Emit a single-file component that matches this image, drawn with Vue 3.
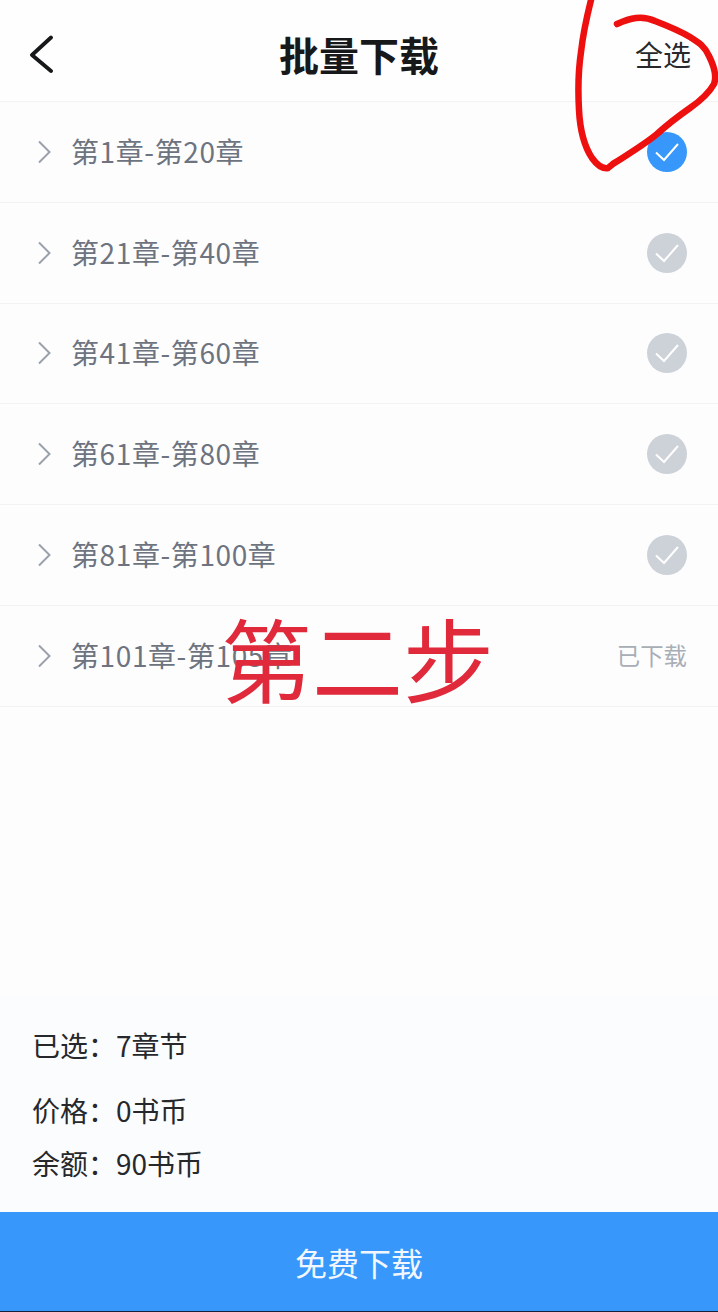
<script setup>
const rows = [
  { label: '第1章-第20章', state: 'on' },
  { label: '第21章-第40章', state: 'off' },
  { label: '第41章-第60章', state: 'off' },
  { label: '第61章-第80章', state: 'off' },
  { label: '第81章-第100章', state: 'off' },
  { label: '第101章-第105章', state: 'done' }
]
</script>

<template>
  <div class="page">
    <header class="header">
      <svg class="back" width="26" height="38" viewBox="0 0 26 38">
        <path d="M23 2.5 L4 20 L23 36" fill="none" stroke="#17181a" stroke-width="3.8" stroke-linecap="round" stroke-linejoin="round" />
      </svg>
      <h1 class="title">批量下载</h1>
      <span class="all">全选</span>
    </header>

    <ul class="list">
      <li v-for="row in rows" :key="row.label" class="row">
        <svg class="chev" width="14" height="24" viewBox="0 0 14 24">
          <path d="M2 1.5 L12.5 12 L2 22.5" fill="none" stroke="#9aa1aa" stroke-width="2" />
        </svg>
        <span class="label">{{ row.label }}</span>
        <span v-if="row.state === 'done'" class="done">已下载</span>
        <span v-else class="check" :class="row.state">
          <svg width="40" height="40" viewBox="0 0 40 40">
            <path d="M9 20.5 L17 28 L31 12" fill="none" stroke="#fff" stroke-width="2" />
          </svg>
        </span>
      </li>
    </ul>

    <section class="summary">
      <p class="line first">已选：<span>7章节</span></p>
      <p class="line second">价格：<span>0书币</span></p>
      <p class="line third">余额：<span>90书币</span></p>
    </section>

    <button class="cta">免费下载</button>

    <svg class="scribble" width="718" height="180" viewBox="0 0 718 180">
      <path d="M591 0 C587 16 583 34 581 52 C578 72 578 92 579 110 C580 130 584 146 592 158 C597 165 602 169 608 168 C610 167 612 164 616 162 C630 153 645 144 657 134 C668 124 680 115 690 108 C700 101 709 93 714 84 C717 76 714 66 709 56 C705 46 698 42 690 37 C680 31 668 26 655 21 C642 15 630 18 617 24" fill="none" stroke="#ee0f0f" stroke-width="6.5" stroke-linecap="round" stroke-linejoin="round" />
    </svg>
    <div class="stamp">第二步</div>
  </div>
</template>

<style>
html, body { margin: 0; background: #fdfdfe; }
</style>

<style scoped>
.page {
  position: relative;
  width: 718px;
  height: 1312px;
  overflow: hidden;
  display: flex;
  flex-direction: column;
  background: #fdfdfe;
  font-family: "Noto Sans CJK SC", "Noto Sans", sans-serif;
}
.header {
  position: relative;
  flex: none;
  height: 101px;
  display: flex;
  align-items: center;
  justify-content: center;
  border-bottom: 1px solid #f3f3f5;
  background: #fefefe;
}
.back { position: absolute; left: 28px; top: 35px; }
.title {
  margin: 0;
  font-size: 40px;
  line-height: 56px;
  font-weight: 700;
  color: #17181a;
  font-family: "Noto Sans CJK SC", serif;
  position: relative;
  top: 3px;
}
.all {
  position: absolute;
  left: 635px;
  top: 35px;
  font-size: 28px;
  line-height: 38px;
  color: #26282b;
}
.list { list-style: none; margin: 0; padding: 0; flex: none; }
.row {
  box-sizing: border-box;
  height: 100.8px;
  display: flex;
  align-items: center;
  border-bottom: 1px solid #f3f3f5;
  padding: 0 31px 0 37px;
}
.chev { flex: none; margin-right: 20px; }
.label {
  flex: 1;
  font-size: 28px;
  line-height: 40px;
  letter-spacing: 0.6px;
  color: #6d7480;
  position: relative;
  top: -1px;
}
.check {
  flex: none;
  width: 40px;
  height: 40px;
  border-radius: 50%;
  background: #cdd2d9;
}
.check.on { background: #3797fb; }
.check svg { display: block; }
.done {
  font-size: 23.4px;
  line-height: 32px;
  color: #a8aeb6;
  position: relative;
  top: -1px;
}
.summary {
  flex: 1;
  margin-top: 290px;
  background: #fbfcfe;
  padding-left: 32px;
  min-height: 0;
}
.line {
  margin: 0;
  font-size: 28px;
  line-height: 40px;
  color: #26282b;
  display: flex;
}
.first { margin-top: 28px; }
.second { margin-top: 25px; }
.third { margin-top: 13px; }
.cta {
  flex: none;
  height: 100px;
  border: 0;
  border-bottom: 1px solid #13223a;
  background: #3797fb;
  color: #f2f7ff;
  font-family: inherit;
  font-size: 32px;
  padding: 0;
}
.scribble { position: absolute; left: 0; top: 0; pointer-events: none; }
.stamp {
  position: absolute;
  left: 221px;
  top: 591px;
  font-size: 91px;
  line-height: 130px;
  font-weight: 400;
  color: #e02a3c;
  white-space: nowrap;
}
</style>
